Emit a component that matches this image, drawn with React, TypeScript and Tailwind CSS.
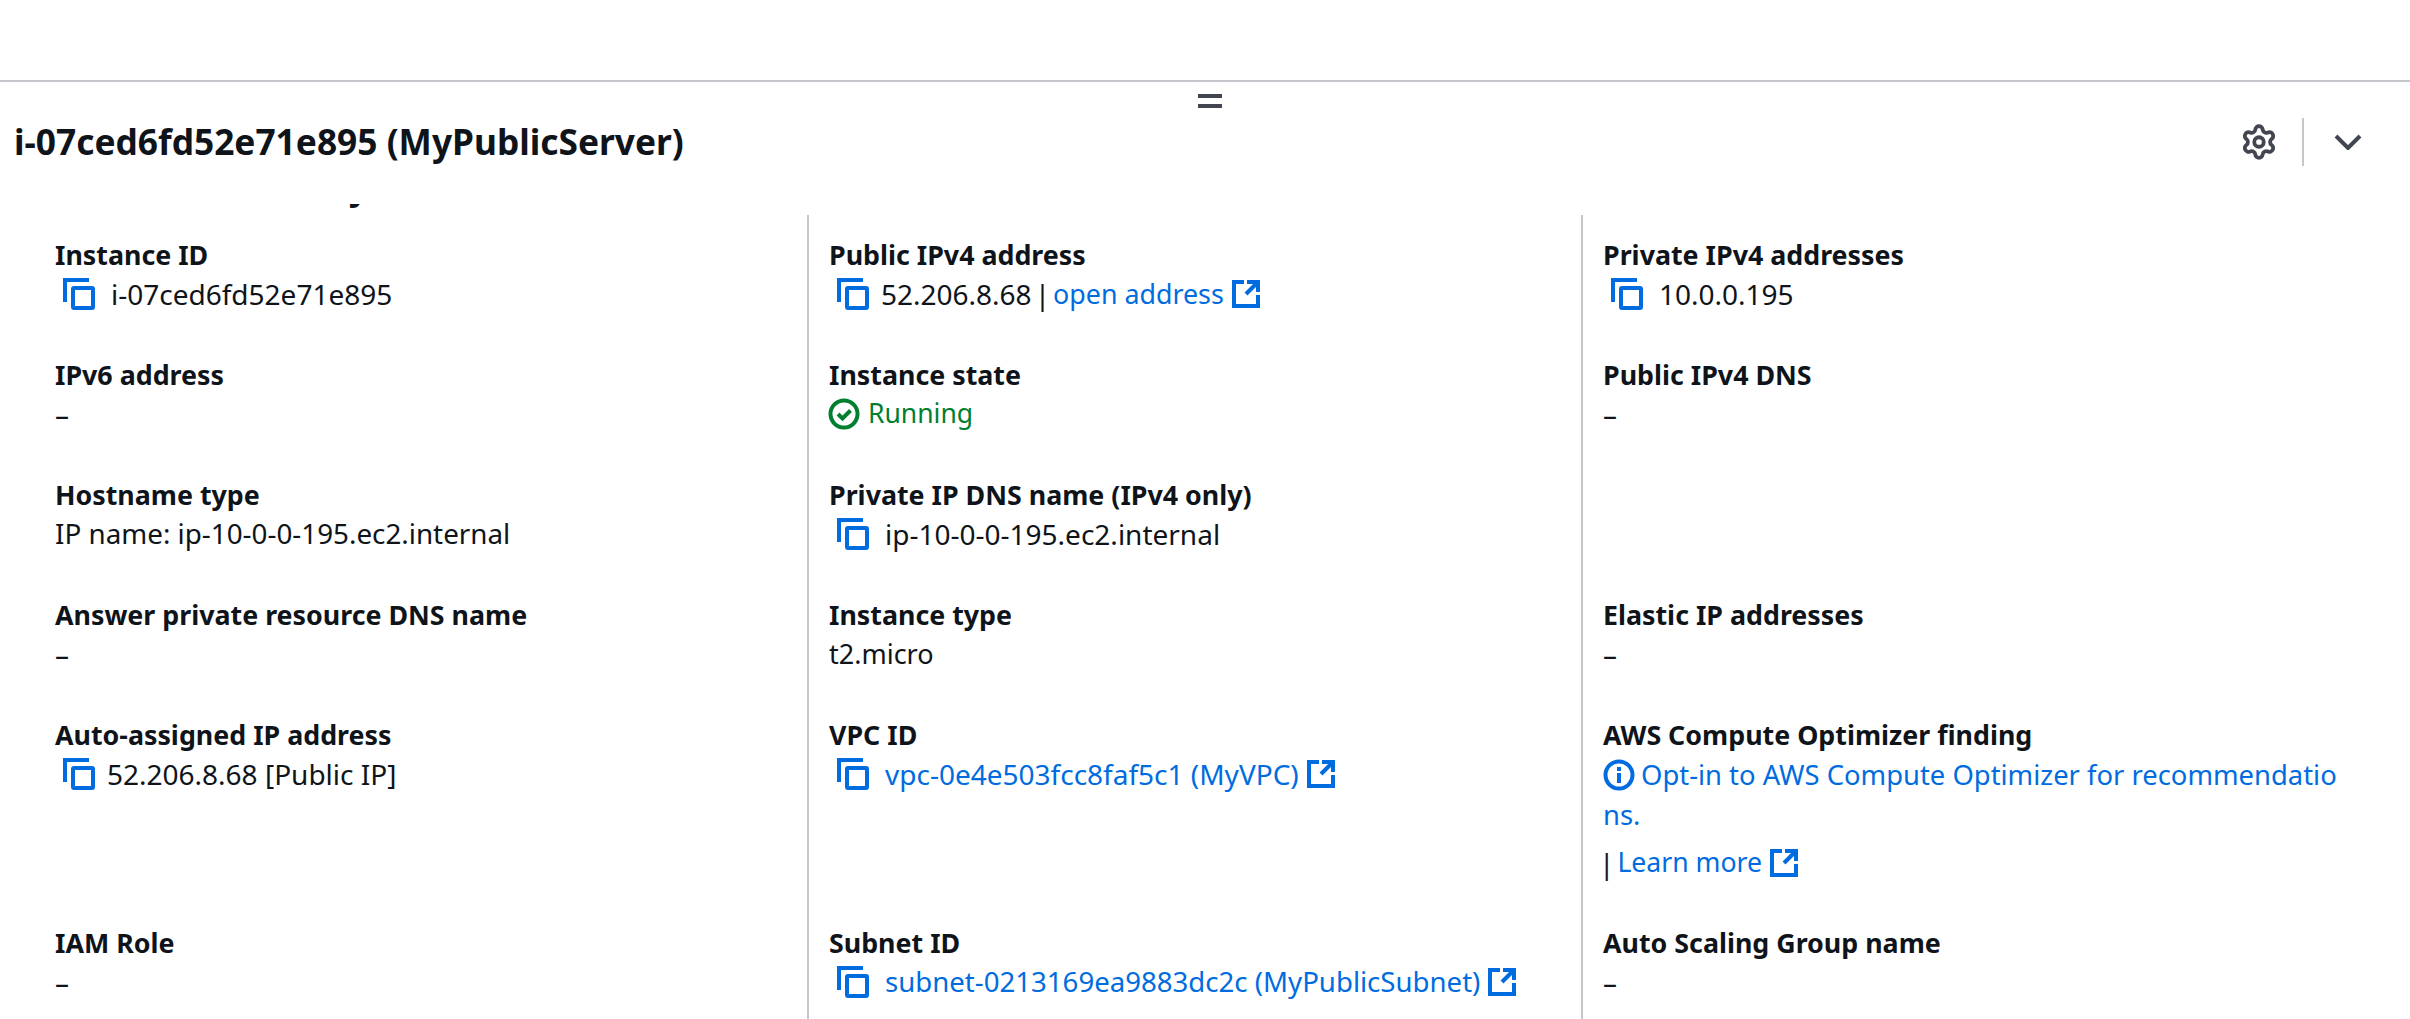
import React from "react";
import { Settings } from "lucide-react";

const Copy = () => (
  <svg width="32" height="32" viewBox="0 0 32 32" fill="none" className="shrink-0" stroke="#006ce0" strokeWidth="4">
    <path d="M26 2H2v22" />
    <rect x="10" y="10" width="20" height="20" rx="1" />
  </svg>
);

const Ext = () => (
  <svg width="28" height="28" viewBox="0 0 28 28" fill="none" className="shrink-0 inline-block" stroke="#006ce0" strokeWidth="4">
    <path d="M12 2H2v24h24V15" />
    <path d="M15 2h11v10" />
    <path d="M26 2 14 14" />
  </svg>
);

const Link = ({ children, className = "" }: { children: React.ReactNode; className?: string }) => (
  <span className={`text-[#006ce0] ${className}`}>{children}</span>
);

const Field = ({ label, children }: { label?: string; children?: React.ReactNode }) => (
  <div className="border-l-2 border-[#c6c6cd] nth-[3n+1]:border-transparent nth-[-n+3]:pt-[20px] pl-[20px] pr-[16px] pb-[40px] break-all">
    {label && <div className="font-bold text-[26.8px] leading-[40px]">{label}</div>}
    {children}
  </div>
);

const Val = ({ children, className = "" }: { children: React.ReactNode; className?: string }) => (
  <div className={`flex items-center h-[40px] pb-[2px] whitespace-nowrap ${className}`}>{children}</div>
);

const Dash = () => <Val>–</Val>;

export default function App() {
  return (
    <div className="h-screen overflow-hidden bg-white text-[#0f141a] text-[28px]" style={{ fontFamily: '"Noto Sans", sans-serif' }}>
      <div className="h-[82px] border-b-2 border-[#c6c6cd]" />
      <div className="flex flex-col items-center pt-[12px]">
        <div className="w-[24px] h-[14px] border-y-4 border-[#424650] ml-[10px]" />
      </div>
      <div className="flex items-center justify-between h-[84px] pl-[14px] pr-[48px] mt-[-8px]">
        <h2 className="font-bold text-[35.3px] pb-[2px]">i-07ced6fd52e71e895 (MyPublicServer)</h2>
        <div className="flex items-center">
          <Settings size={38} strokeWidth={2.4} color="#424650" />
          <div className="w-[2px] h-[48px] bg-[#c6c6cd] ml-[24px] mr-[30px]" />
          <svg width="28" height="16" viewBox="0 0 28 16" fill="none" stroke="#424650" strokeWidth="4">
            <path d="m2 2 12 12L26 2" />
          </svg>
        </div>
      </div>
      <div className="h-[4px] mt-[20px] overflow-hidden pl-[40px] font-bold">
        <div className="mt-[-39px] text-[35.3px] leading-[40px] whitespace-nowrap">Instance summary</div>
      </div>
      <div className="grid grid-cols-[774px_774px_774px] pl-[33px] mt-[7px]">
        <Field label="Instance ID">
          <Val><span className="ml-[8px] mr-[16px] flex"><Copy /></span>i-07ced6fd52e71e895</Val>
        </Field>
        <Field label="Public IPv4 address">
          <Val><span className="ml-[8px] mr-[12px] flex"><Copy /></span>52.206.8.68<span className="mx-[3px]">|</span><Link className="text-[26.8px]">open address</Link><span className="ml-[8px] flex"><Ext /></span></Val>
        </Field>
        <Field label="Private IPv4 addresses">
          <Val><span className="ml-[8px] mr-[16px] flex"><Copy /></span>10.0.0.195</Val>
        </Field>

        <Field label="IPv6 address"><Dash /></Field>
        <Field label="Instance state">
          <Val>
            <svg width="32" height="32" viewBox="0 0 32 32" fill="none" stroke="#00802f" strokeWidth="4" className="ml-[-1px] mr-[8px]">
              <circle cx="16" cy="16" r="13.5" />
              <path d="m10 16 4.500 4.500 8-8" />
            </svg>
            <span className="text-[#00802f] text-[26.5px]">Running</span>
          </Val>
        </Field>
        <Field label="Public IPv4 DNS"><Dash /></Field>

        <Field label="Hostname type"><Val className="text-[27.8px]">IP name: ip-10-0-0-195.ec2.internal</Val></Field>
        <Field label="Private IP DNS name (IPv4 only)">
          <Val><span className="ml-[8px] mr-[16px] flex"><Copy /></span>ip-10-0-0-195.ec2.internal</Val>
        </Field>
        <Field />

        <Field label="Answer private resource DNS name"><Dash /></Field>
        <Field label="Instance type"><Val className="text-[27px]">t2.micro</Val></Field>
        <Field label="Elastic IP addresses"><Dash /></Field>

        <Field label="Auto-assigned IP address">
          <Val><span className="ml-[8px] mr-[12px] flex"><Copy /></span>52.206.8.68 [Public IP]</Val>
        </Field>
        <Field label="VPC ID">
          <Val><span className="ml-[8px] mr-[16px] flex"><Copy /></span><Link>vpc-0e4e503fcc8faf5c1 (MyVPC)</Link><span className="ml-[8px] flex"><Ext /></span></Val>
        </Field>
        <Field label="AWS Compute Optimizer finding">
          <div className="leading-[40px] text-[#006ce0] text-[27.4px]">
            <svg width="32" height="32" viewBox="0 0 32 32" fill="none" stroke="#006ce0" strokeWidth="4" className="inline-block align-[-6px] mr-[6px]">
              <circle cx="16" cy="16" r="13.5" />
              <path d="M16 14v10M16 8v4" />
            </svg>
            Opt-in to AWS Compute Optimizer for recommendations.
          </div>
          <div className="flex items-center h-[40px] mt-[8px]"><span className="ml-[-4px] mr-[3px]">|</span><Link className="text-[26.6px]">Learn more</Link><span className="ml-[8px] flex"><Ext /></span></div>
        </Field>

        <Field label="IAM Role"><Dash /></Field>
        <Field label="Subnet ID">
          <Val><span className="ml-[8px] mr-[16px] flex"><Copy /></span><Link className="text-[27.6px]">subnet-0213169ea9883dc2c (MyPublicSubnet)</Link><span className="ml-[8px] flex"><Ext /></span></Val>
        </Field>
        <Field label="Auto Scaling Group name"><Dash /></Field>
      </div>
    </div>
  );
}
